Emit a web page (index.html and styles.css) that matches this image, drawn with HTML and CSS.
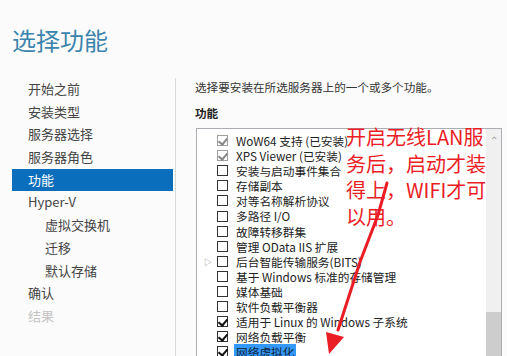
FILE: index.html
```html
<!DOCTYPE html>
<html lang="zh-CN">
<head>
    <meta charset="UTF-8">
    <title>选择功能</title>
    <link rel="stylesheet" href="styles.css">
</head>
<body>
    <h1 class="title">选择功能</h1>
    <div class="main">
        <ul class="nav">
            <li>开始之前</li>
            <li>安装类型</li>
            <li>服务器选择</li>
            <li>服务器角色</li>
            <li class="active">功能</li>
            <li>Hyper-V</li>
            <li class="sub">虚拟交换机</li>
            <li class="sub">迁移</li>
            <li class="sub">默认存储</li>
            <li>确认</li>
            <li class="disabled">结果</li>
        </ul>
        <div class="content">
            <p class="desc">选择要安装在所选服务器上的一个或多个功能。</p>
            <h3 class="label">功能</h3>
            <div class="listbox">
                <ul class="features">
                    <li><span class="box checked grey"></span>WoW64 支持 (已安装)</li>
                    <li><span class="box checked grey"></span>XPS Viewer (已安装)</li>
                    <li><span class="box"></span>安装与启动事件集合</li>
                    <li><span class="box"></span>存储副本</li>
                    <li><span class="box"></span>对等名称解析协议</li>
                    <li><span class="box"></span>多路径 I/O</li>
                    <li><span class="box"></span>故障转移群集</li>
                    <li><span class="box"></span>管理 OData IIS 扩展</li>
                    <li><span class="expander">▷</span><span class="box"></span>后台智能传输服务(BITS)</li>
                    <li><span class="box"></span>基于 Windows 标准的存储管理</li>
                    <li><span class="box"></span>媒体基础</li>
                    <li><span class="box"></span>软件负载平衡器</li>
                    <li><span class="box checked"></span>适用于 Linux 的 Windows 子系统</li>
                    <li><span class="box checked"></span>网络负载平衡</li>
                    <li><span class="box checked"></span><span class="selected">网络虚拟化</span></li>
                </ul>
                <div class="scrollbar">
                    <span class="arrow-up">⌃</span>
                    <div class="thumb"></div>
                </div>
            </div>
        </div>
    </div>

    <div class="note">开启无线LAN服<br>务后，启动才装<br>得上，WIFI才可<br>以用。</div>
    <svg class="pointer" width="507" height="356" viewBox="0 0 507 356">
        <path d="M387 183 L378 215 L360 262 L338 330" stroke="#ea1d25" stroke-width="3" fill="none" stroke-linecap="round"/>
        <polygon points="329,354 326,332 344,337" fill="#ea1d25"/>
    </svg>
</body>
</html>
```

FILE: styles.css
```css
body {
    margin: 0;
    background-color: #fbfbfb;
    font-family: "Noto Sans CJK SC", "Noto Sans", sans-serif;
    color: #333;
    overflow: hidden;
    height: 356px;
    position: relative;
}
.title {
    margin: 0;
    padding: 24px 0 0 12px;
    height: 54px;
    box-sizing: border-box;
    font-size: 24px;
    font-weight: normal;
    line-height: 32px;
    color: #3a84ad;
}
.main {
    display: grid;
    grid-template-columns: 176px 1fr;
    margin-top: 24px;
    height: 278px;
    overflow: hidden;
}
.nav {
    list-style: none;
    margin: 0;
    padding: 0 0 0 12px;
    border-right: 1px solid #d9d9d9;
}
.nav li {
    height: 22.7px;
    line-height: 22.7px;
    font-size: 13px;
    padding-left: 16px;
    margin-right: 2px;
    color: #444;
}
.nav li.sub {
    padding-left: 33px;
}
.nav li.active {
    background-color: #0a6ebd;
    color: #fff;
}
.nav li.disabled {
    color: #c4c4c4;
}
.content {
    padding-left: 19px;
}
.desc {
    margin: 0;
    font-size: 11.6px;
    line-height: 18px;
    color: #333;
}
.label {
    margin: 8px 0 0;
    font-size: 11.6px;
    line-height: 18px;
    font-weight: bold;
    color: #222;
}
.listbox {
    margin-top: 6px;
    border: 1px solid #abadb3;
    border-bottom: none;
    background: #fff;
    width: 306px;
    height: 230px;
    display: flex;
    box-sizing: border-box;
    margin-left: 1px;
    overflow: hidden;
}
.features {
    flex: 1;
    list-style: none;
    margin: 0;
    padding: 4px 0 0 20px;
}
.features li {
    height: 15.1px;
    line-height: 15.1px;
    font-size: 11.7px;
    color: #222;
    display: flex;
    align-items: center;
    white-space: nowrap;
    position: relative;
}
.box {
    width: 11px;
    height: 11px;
    border: 1px solid #333;
    box-sizing: border-box;
    margin-right: 8px;
    flex: none;
    background: #fff;
    position: relative;
}
.box.grey {
    border-color: #a0a0a0;
}
.box.checked::after {
    content: "";
    position: absolute;
    left: 2px;
    top: 0px;
    width: 4px;
    height: 7px;
    border-right: 2px solid #111;
    border-bottom: 2px solid #111;
    transform: rotate(40deg);
}
.box.grey.checked::after {
    border-color: #888;
}
.expander {
    position: absolute;
    left: -13px;
    font-size: 8px;
    color: #888;
}
.selected {
    background-color: #3399ff;
    color: #123;
    padding: 0 2px;
    margin-left: -2px;
}
.scrollbar {
    width: 15px;
    background-color: #f0f0f0;
    position: relative;
    flex: none;
}
.arrow-up {
    display: block;
    text-align: center;
    font-size: 10px;
    color: #999;
    line-height: 16px;
    margin-top: 3px;
}
.thumb {
    position: absolute;
    left: 0;
    right: 0;
    top: 183px;
    bottom: 0;
    background-color: #cdcdcd;
}
.note {
    position: absolute;
    left: 346px;
    top: 124px;
    font-size: 20px;
    line-height: 26.7px;
    color: #ea1d25;
    white-space: nowrap;
}
.pointer {
    position: absolute;
    left: 0;
    top: 0;
    pointer-events: none;
}
```
